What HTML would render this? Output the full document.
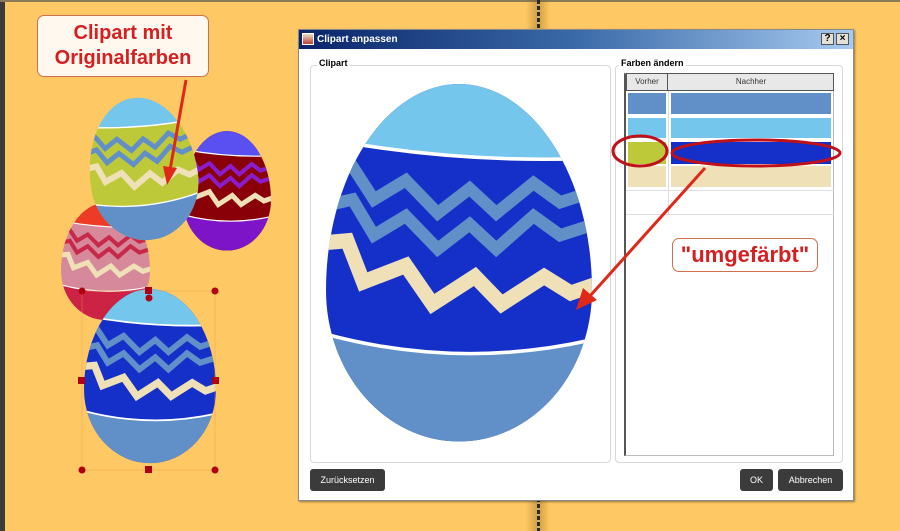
<!DOCTYPE html>
<html><head><meta charset="utf-8"><style>
*{margin:0;padding:0;box-sizing:border-box}
body{width:900px;height:531px;overflow:hidden;background:#fec864;position:relative;font-family:"Liberation Sans",sans-serif}
.abs{position:absolute}
.btn{position:absolute;background:#3b3b3b;border-radius:3px;color:#fff;font-size:9px;display:flex;align-items:center;justify-content:center;height:22px}
</style></head><body>
<div class="abs" style="left:0;top:0;width:5px;height:531px;background:#3a3a3a"></div>
<div class="abs" style="left:0;top:0;width:900px;height:2px;background:#8a7a5a"></div>
<div class="abs" style="left:526px;top:0;width:24px;height:531px;background:linear-gradient(90deg,rgba(0,0,0,0),rgba(120,80,0,.35),rgba(0,0,0,0))"></div>
<div class="abs" style="left:537px;top:0;width:3px;height:531px;background:repeating-linear-gradient(180deg,#2a2a2a 0 4px,#c8b080 4px 6px)"></div>

<svg class="abs" style="left:0;top:0" width="900" height="531" viewBox="0 0 900 531">
<defs>
<clipPath id="ec"><path d="M0 75A50 75 0 0 1 100 75A50 55 0 0 1 0 75Z"/></clipPath>
<g id="egg"><g clip-path="url(#ec)">
<rect x="0" y="0" width="100" height="130" style="fill:var(--b)"/>
<path d="M0 0H100V27Q50 29 0 20Z" style="fill:var(--t)"/>
<path d="M0 20Q50 29 100 27" fill="none" stroke="#fff" stroke-width="1.3"/>
<polyline points="-4,33 10,30 18,42 30,35 42,47 54,38 64,47 78,36 88,43 104,38" fill="none" stroke-width="4.5" style="stroke:var(--z)"/>
<polyline points="-4,45 10,42 18,55 30,48 42,60 54,51 64,60 78,48 88,55 104,50" fill="none" stroke-width="4.5" style="stroke:var(--z)"/>
<polyline points="-4,58 8,57 14,72 30,66 40,80 56,70 66,80 82,70 92,76 104,72" fill="none" stroke-width="5.5" style="stroke:var(--w)"/>
<path d="M0 91Q50 104 100 93V130H0Z" style="fill:var(--o)"/>
<path d="M0 91Q50 104 100 93" fill="none" stroke="#fff" stroke-width="1.3"/>
</g></g>
</defs>
<use href="#egg" transform="translate(61,203) scale(0.89,0.9)" style="--b:#d6899a;--t:#ee3b26;--z:#c8284a;--w:#efe0b8;--o:#cc2244"/>
<use href="#egg" transform="translate(183,131) scale(0.88,0.92)" style="--b:#890008;--t:#5a4ff0;--z:#8a1ccc;--w:#efe0b8;--o:#7d14c8"/>
<use href="#egg" transform="translate(88,98) rotate(-8 50 65) scale(1.08,1.1)" style="--b:#bec93a;--t:#74c6ec;--z:#6190c8;--w:#efe0b8;--o:#6190c8"/>
<use href="#egg" transform="translate(84,289) scale(1.32,1.34)" style="--b:#1530c8;--t:#74c6ec;--z:#6190c8;--w:#efe0b8;--o:#6190c8"/>
<rect x="82" y="291" width="133" height="179" fill="none" stroke="#f0a040" stroke-width=".6" opacity=".6"/>
<g fill="#b00010">
<circle cx="82" cy="291" r="3.5"/><circle cx="215" cy="291" r="3.5"/><circle cx="82" cy="470" r="3.5"/><circle cx="215" cy="470" r="3.5"/><circle cx="149" cy="298" r="3.5"/>
<rect x="145" y="287" width="7" height="7"/><rect x="78" y="377" width="7" height="7"/><rect x="212" y="377" width="7" height="7"/><rect x="145" y="466" width="7" height="7"/>
</g>
<line x1="186" y1="80" x2="170" y2="170" stroke="#e02818" stroke-width="3"/>
<polygon points="163,166 177,168 167,185" fill="#e02818"/>
</svg>

<div class="abs" style="left:37px;top:15px;width:172px;height:62px;background:#fff8ee;border:1px solid #d07050;border-radius:7px;color:#d42020;font-weight:bold;font-size:20px;line-height:25px;text-align:center;padding-top:5px">Clipart mit<br>Originalfarben</div>

<div class="abs" style="left:298px;top:29px;width:556px;height:472px;background:#fff;border:1px solid #8a8a8a;box-shadow:1px 1px 2px rgba(0,0,0,.4)">
 <div class="abs" style="left:0;top:0;width:554px;height:19px;background:linear-gradient(90deg,#0a246a,#3a6aa8 50%,#a6caf0);color:#fff;font-weight:bold;font-size:10px;line-height:19px;padding-left:18px">Clipart anpassen</div>
 <div class="abs" style="left:3px;top:3px;width:12px;height:12px;background:linear-gradient(#e8e0d0,#c04030);border:1px solid #fff"></div>
 <div class="abs" style="left:522px;top:3px;width:13px;height:12px;background:#e4e0d8;border:1px solid #555;font-size:10px;font-weight:bold;line-height:10px;text-align:center">?</div>
 <div class="abs" style="left:537px;top:3px;width:13px;height:12px;background:#e4e0d8;border:1px solid #555;font-size:10px;font-weight:bold;line-height:10px;text-align:center">×</div>
 <div class="abs" style="left:11px;top:35px;width:301px;height:398px;border:1px solid #d8d8d8;border-radius:4px"></div>
 <div class="abs" style="left:18px;top:28px;background:#fff;font-size:9px;font-weight:bold;padding:0 2px">Clipart</div>
 <div class="abs" style="left:316px;top:35px;width:228px;height:398px;border:1px solid #d8d8d8;border-radius:4px"></div>
 <div class="abs" style="left:320px;top:28px;background:#fff;font-size:9px;font-weight:bold;padding:0 2px">Farben ändern</div>
 <div class="abs" style="left:325px;top:43px;width:210px;height:383px;border:1px solid #bbb;border-left:2px solid #555"></div>
 <div class="abs" style="left:327px;top:43px;width:208px;height:18px;background:#e8e8e8;border:1px solid #555;font-size:8px;color:#333;line-height:16px">
  <span class="abs" style="left:0;width:41px;text-align:center;border-right:1px solid #555;height:16px">Vorher</span>
  <span class="abs" style="left:42px;width:164px;text-align:center">Nachher</span></div>
 <div class="abs" style="left:329px;top:63px;width:38px;height:21px;background:#6190c8"></div><div class="abs" style="left:372px;top:63px;width:160px;height:21px;background:#6190c8"></div>
 <div class="abs" style="left:329px;top:88px;width:38px;height:20px;background:#74c6ec"></div><div class="abs" style="left:372px;top:88px;width:160px;height:20px;background:#74c6ec"></div>
 <div class="abs" style="left:329px;top:112px;width:38px;height:22px;background:#bec93a"></div><div class="abs" style="left:372px;top:112px;width:160px;height:22px;background:#1530c8"></div>
 <div class="abs" style="left:329px;top:136px;width:38px;height:21px;background:#efe0b8"></div><div class="abs" style="left:372px;top:136px;width:160px;height:21px;background:#efe0b8"></div>
 <div class="abs" style="left:327px;top:160px;width:208px;height:1px;background:#ddd"></div>
 <div class="abs" style="left:327px;top:184px;width:208px;height:1px;background:#ddd"></div>
 <div class="abs" style="left:369px;top:61px;width:1px;height:124px;background:#ddd"></div>
 <div class="btn" style="left:11px;top:439px;width:75px">Zurücksetzen</div>
 <div class="btn" style="left:441px;top:439px;width:33px">OK</div>
 <div class="btn" style="left:479px;top:439px;width:65px">Abbrechen</div>
</div>

<svg class="abs" style="left:0;top:0" width="900" height="531" viewBox="0 0 900 531">
<use href="#egg" transform="translate(326,84) scale(2.66,2.75)" style="--b:#1530c8;--t:#74c6ec;--z:#6190c8;--w:#efe0b8;--o:#6190c8"/>
<ellipse cx="640" cy="151" rx="27" ry="15" fill="none" stroke="#c01018" stroke-width="3"/>
<ellipse cx="756" cy="153" rx="84" ry="13" fill="none" stroke="#c01018" stroke-width="3"/>
<line x1="705" y1="168" x2="590" y2="296" stroke="#e02818" stroke-width="3"/>
<polygon points="583,288 597,300 576,310" fill="#e02818"/>
</svg>
<div class="abs" style="left:672px;top:238px;width:146px;height:34px;background:#fff;border:1px solid #d07050;border-radius:7px;color:#d42020;font-weight:bold;font-size:22px;line-height:32px;text-align:center">"umgefärbt"</div>
</body></html>
